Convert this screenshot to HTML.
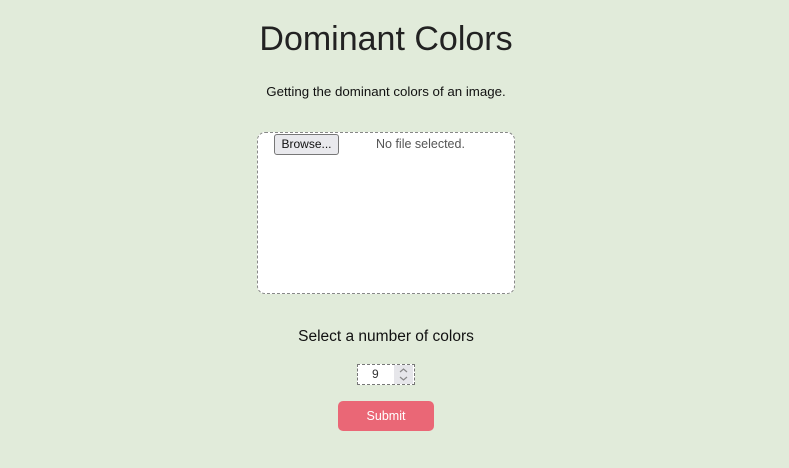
<!DOCTYPE html>
<html><head><style>
body{margin:0;width:789px;height:468px;background:#e1ebda;font-family:"Liberation Sans",sans-serif;position:relative;overflow:hidden}
.a{position:absolute}
</style></head><body>
<div class="a" style="left:0;width:772px;top:20px;text-align:center;font-size:34px;color:#222">Dominant Colors</div>
<div class="a" style="left:0;width:772px;top:84px;text-align:center;font-size:13.3px;color:#111">Getting the dominant colors of an image.</div>
<div class="a" style="left:257px;top:132px;width:256px;height:160px;background:#fff;border:1px dashed #888;border-radius:8px"></div>
<div class="a" style="left:274px;top:134px;width:63px;height:19px;border:1px solid #777;border-radius:3px;background:#e9e9ed;font-size:12px;line-height:19px;text-align:center;color:#111">Browse...</div>
<div class="a" style="left:376px;top:137px;font-size:12.5px;color:#555">No file selected.</div>
<div class="a" style="left:0;width:772px;top:328px;text-align:center;font-size:15.5px;color:#111">Select a number of colors</div>
<div class="a" style="left:357px;top:364px;width:56px;height:19px;border:1px dashed #777;background:#fff"></div>
<div class="a" style="left:372px;top:367px;font-size:12px;color:#333">9</div>
<svg class="a" style="left:394px;top:365px" width="19" height="19"><rect width="19" height="19" fill="#e6e6ea"/><path d="M6 7 L9.5 4 L13 7 M6 12 L9.5 15 L13 12" stroke="#888" stroke-width="1.2" fill="none"/></svg>
<div class="a" style="left:338px;top:401px;width:96px;height:30px;background:#ea6776;border-radius:5px;color:#fff;font-size:12.5px;line-height:30px;text-align:center">Submit</div>
</body></html>
